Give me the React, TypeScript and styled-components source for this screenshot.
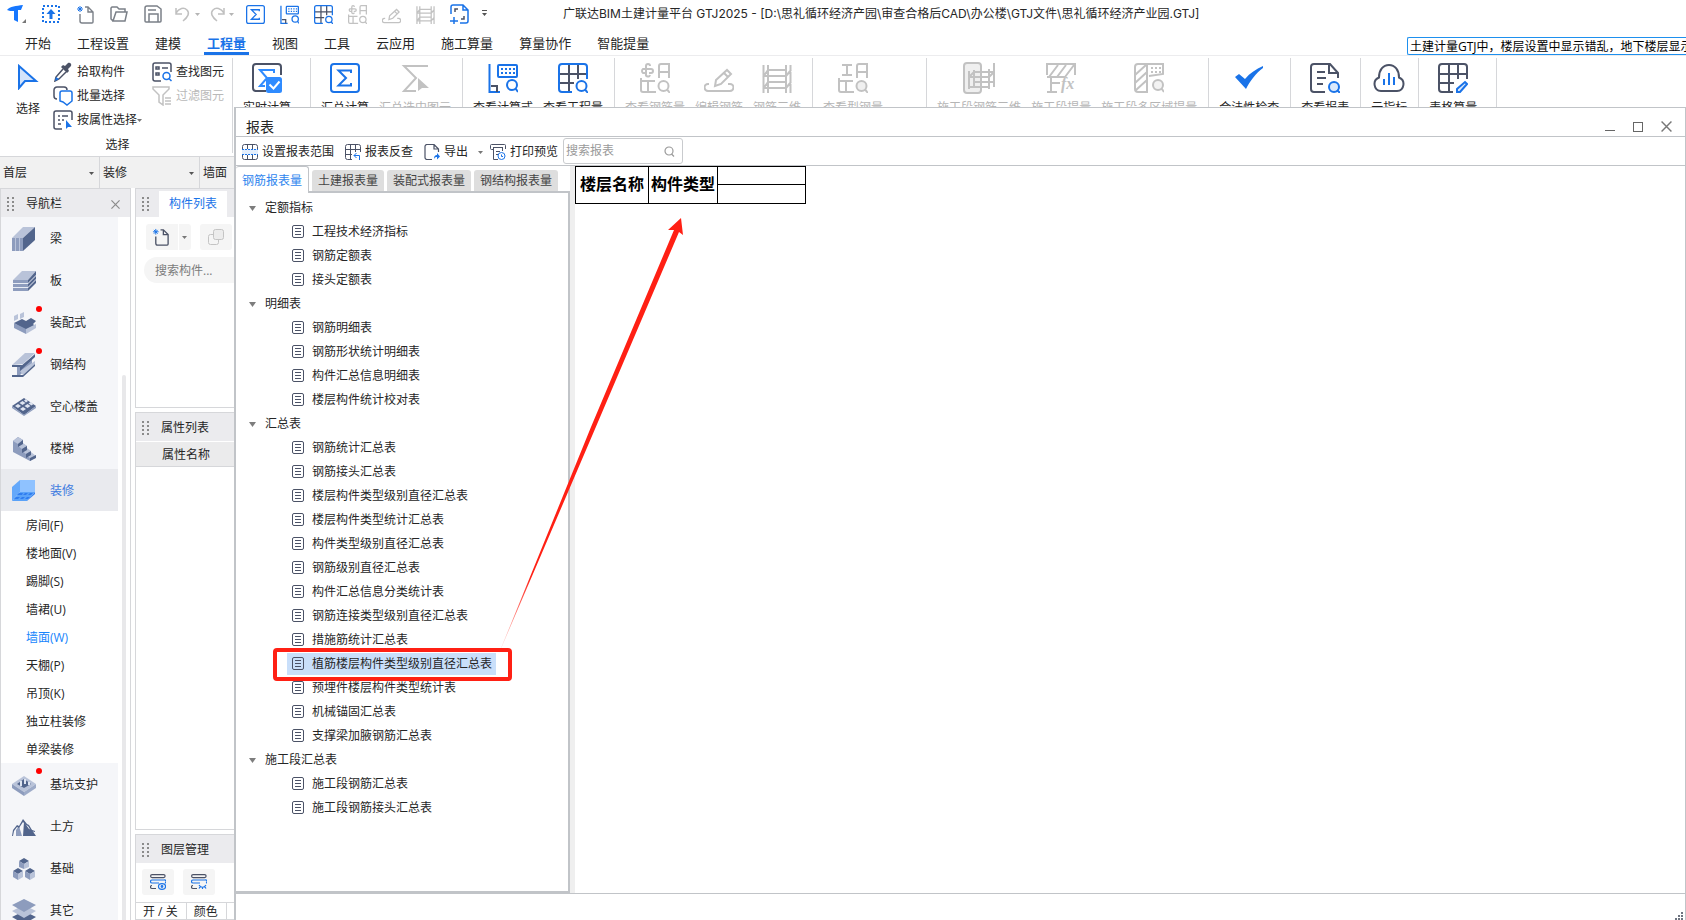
import React from "react";
import styled, { createGlobalStyle } from "styled-components";

const BLUE = "#1a73e8";
const DARK = "#4b5266";
const GRAY = "#c2c2c2";
const LINE = "#d6d7da";
const FRAME = "#c1c4c8";

const GlobalStyle = createGlobalStyle`
  * { box-sizing: border-box; }
  html, body { margin: 0; padding: 0; background: #fff; }
  body, button, input, select, table {
    font-family: "Open Sans", "Noto Sans CJK SC", sans-serif;
    font-size: 12px;
    line-height: 16px;
    color: #262626;
  }
  button { border: 0; padding: 0; background: none; white-space: nowrap; }
  ul { list-style: none; margin: 0; padding: 0; }
  svg { display: block; flex: none; }
  h2 { margin: 0; font-size: 12px; font-weight: 400; }
`;

/* ---------- icons ---------- */

type IconProps = { size?: number };

const Line = ({
  size = 30,
  box = 30,
  stroke = BLUE,
  w = 2,
  children,
}: {
  size?: number;
  box?: number;
  stroke?: string;
  w?: number;
  children: React.ReactNode;
}) => (
  <svg width={size} height={size} viewBox={`0 0 ${box} ${box}`} fill="none" stroke={stroke} strokeWidth={w} aria-hidden="true">
    {children}
  </svg>
);

const Sigma = ({ size }: IconProps) => (
  <Line size={size}>
    <rect x="1" y="1" width="28" height="28" rx="3" />
    <path d="M21 10V7.500H8.500L16 15l-7.500 7.500H21V20" />
  </Line>
);
const SigmaCheck = () => (
  <Line>
    <path d="M14 28H4a3 3 0 0 1-3-3V4a3 3 0 0 1 3-3h22a3 3 0 0 1 3 3v8" stroke={DARK} />
    <path d="M22 10V7H8l7 8-7 8h5" stroke="#2f8bff" />
    <rect x="14" y="14" width="16" height="16" rx="2.500" fill="#2f8bff" stroke="none" />
    <path d="M17.500 21.500l4 4 6-7" stroke="#fff" />
  </Line>
);
const SigmaPick = () => (
  <Line stroke={GRAY}>
    <path d="M28 3H4l12 12L4 28h12" />
    <path d="M18 15v13l4-3 7 0z" fill={GRAY} stroke="none" />
  </Line>
);
const Formula = ({ size }: IconProps) => (
  <Line size={size}>
    <path d="M1.500 1v28H12" />
    <path d="M3 23h6v6" stroke={DARK} />
    <rect x="10" y="2" width="19" height="12" rx="1" />
    <path d="M13 6h14M13 10h14" strokeDasharray="2 2" />
    <circle cx="24" cy="22" r="5" />
    <path d="M27.500 25.500L30 29" />
  </Line>
);
const GridSearch = ({ size }: IconProps) => (
  <Line size={size}>
    <path d="M11 1v28M20 1v15M1 11h28M1 20h15" stroke={DARK} />
    <path d="M14 29H4a3 3 0 0 1-3-3V4a3 3 0 0 1 3-3h22a3 3 0 0 1 3 3v12" />
    <circle cx="23.500" cy="23" r="5" />
    <path d="M27 26.500L30 30" />
  </Line>
);
const RebarQty = ({ size }: IconProps) => (
  <Line size={size} stroke={GRAY}>
    <path d="M6 10H3a2.500 2.500 0 0 1 0-4h8a2 2 0 0 1 0 4H9M6 13V3a2 2 0 0 1 4 0M6 11a2 2 0 0 0 4 1" />
    <path d="M19 15V3a2 2 0 0 1 2-2h8v14M19 9h10M1 15v12a2 2 0 0 0 2 2h13M1 18h14M8 18v11" />
    <circle cx="23.500" cy="23" r="5" />
    <path d="M27 26.500L30 30" />
  </Line>
);
const RebarEdit = ({ size }: IconProps) => (
  <Line size={size} stroke={GRAY}>
    <path d="M5 21H4a3.500 3.500 0 0 0 0 7h22a3.500 3.500 0 0 0 0-7h-2" />
    <path d="M11 23l1-6L23 7l4 4-10 10zM20 10l4 4" />
  </Line>
);
const Rebar3d = ({ size }: IconProps) => (
  <Line size={size} stroke={GRAY}>
    <path d="M1.500 2v28M6 2v28M24 2v28M28.500 2v28M6 7h18M2 13h22M6 19h18M2 25h22M1 14l5-7M24 13l5-6M1 26l5-7M24 25l5-6" />
  </Line>
);
const SteelQty = () => (
  <Line stroke={GRAY}>
    <path d="M4 2h10M4 12h10M9 1v12" />
    <path d="M19 15V3a2 2 0 0 1 2-2h8v14M19 9h10M1 15v12a2 2 0 0 0 2 2h13M1 18h14M8 18v11" />
    <circle cx="23.500" cy="23" r="5" fill="#f0f0f0" />
    <path d="M27 26.500L30 30" />
  </Line>
);
const StageRebar = () => (
  <svg width="34" height="32" viewBox="0 0 34 32" fill="none" stroke={GRAY} strokeWidth="2" aria-hidden="true">
    <rect x="2" y="1" width="17" height="30" rx="3" fill="#efefef" />
    <path d="M7 9v18M12 8v18M27 7v20M32 1v24M12 10h20M7 15h20M12 20h20M7 25h20M7 15l5-5M27 15l5-5" />
  </svg>
);
const StageQty = () => (
  <Line stroke={GRAY}>
    <path d="M1 12V1h28v11M1 14h18M3 14L12 2M11 14L20 2M19 14L28 2M5 15v14M1 29h10M5 20h9" />
    <text x="15" y="26" fontFamily="Liberation Serif, serif" fontStyle="italic" fontWeight="700" fontSize="16" fill={GRAY} stroke="none">
      fx
    </text>
  </Line>
);
const StageZone = () => (
  <Line stroke={GRAY}>
    <path d="M13 1H4a3 3 0 0 0-3 3v22a3 3 0 0 0 3 3h9zM1 12L12 2M1 20l12-11M2 27l11-10M13 1h16v10l-14 2" />
    <path d="M17 5h10M17 9h10" strokeDasharray="2 2" />
    <circle cx="24" cy="22" r="5" fill="#f3f3f3" />
    <path d="M27.500 25.500L30 29" />
  </Line>
);
const BigCheck = () => (
  <svg width="30" height="30" viewBox="0 0 30 30" aria-hidden="true">
    <path d="M1 14l4-3 6 5C16 10 22 6 29 3v2C22 10 16 18 12 26z" fill={BLUE} />
  </svg>
);
const ReportIcon = () => (
  <Line stroke={DARK}>
    <path d="M15 29H4a3 3 0 0 1-3-3V4a3 3 0 0 1 3-3h16l8 9v5M19 2v8h9M7 9h8M7 15h9M7 21h6" />
    <circle cx="24" cy="24" r="5" stroke={BLUE} fill="#dceafc" />
    <path d="M27 27l3 3" stroke={BLUE} />
  </Line>
);
const CloudIcon = () => (
  <Line size={32} box={32} stroke={DARK}>
    <path d="M8 29a7 7 0 0 1-2-13.500C6 8 10 3 16 3s10 5 10 12.500A7 7 0 0 1 24 29z" />
    <path d="M11 23v-6M16 23V11M21 23v-8" stroke={BLUE} />
  </Line>
);
const TableEdit = () => (
  <Line stroke={DARK}>
    <path d="M15 29H4a3 3 0 0 1-3-3V4a3 3 0 0 1 3-3h22a3 3 0 0 1 3 3v12M11 1v28M20 1v15M1 11h28M1 20h15" />
    <path d="M19 29v-3l8-7 2 2-7 8z" stroke={BLUE} fill="#dceafc" />
  </Line>
);

const Logo = () => (
  <svg width="20" height="19" viewBox="0 0 20 19" aria-hidden="true">
    <path d="M0 5C3 1 9 1 16 0l-2 5-3 0v12l-4-2V6C4 6 2 6 0 5z" fill="#1677ff" />
    <path d="M19 14v4h-4z" fill="#777" />
  </svg>
);
const UploadBox = () => (
  <Line size={18} box={18}>
    <rect x="1" y="1" width="16" height="16" strokeDasharray="2 2" />
    <path d="M9 14V6" strokeWidth="3" />
    <path d="M4.500 9L9 4l4.500 5z" fill={BLUE} stroke="none" />
  </Line>
);
const NewDoc = ({ size = 19, tone = DARK }: { size?: number; tone?: string }) => (
  <Line size={size} box={19} stroke={tone} w={1.4}>
    <path d="M4 9v7a2 2 0 0 0 2 2h10a1 1 0 0 0 1-1V7l-5-5H9M12 2v5h5" />
    <path d="M4 1v6M1 4h6M2 2l4 4M6 2L2 6" stroke={BLUE} strokeWidth="1" />
  </Line>
);
const OpenDoc = () => (
  <Line size={18} box={18} stroke="#7b8088" w={1.5}>
    <path d="M3 16L1 14V3l1-1h5l2 2h6v3M3 16L6 7h11l-2 9z" />
  </Line>
);
const SaveDoc = () => (
  <Line size={18} box={18} stroke="#7b8088" w={1.5}>
    <path d="M1 3a2 2 0 0 1 2-2h10l4 3v12a1 1 0 0 1-1 1H2a1 1 0 0 1-1-1zM5 17V9h9v8M4 5h8" />
  </Line>
);
const Turn = ({ redo }: { redo?: boolean }) => (
  <svg width="18" height="18" viewBox="0 0 18 18" fill="none" stroke="#c0c0c0" strokeWidth="1.500" aria-hidden="true">
    <path
      transform={redo ? "matrix(-1 0 0 1 18 0)" : undefined}
      d="M2 3v6h6M2 8c3-5 8-6 11-3s1 7-4 11"
    />
  </svg>
);
const AddFrame = () => (
  <Line size={20} box={20} w={1.5}>
    <path d="M2 10V3a2 2 0 0 1 2-2h10l5 5v11a2 2 0 0 1-2 2h-6M14 1v5h5" />
    <path d="M5 13v7M1 17h8" />
    <path d="M6 8V5h3M15 12v3h-3" stroke={DARK} />
  </Line>
);
const Caret = ({ color = "#777" }: { color?: string }) => (
  <svg width="5" height="3" viewBox="0 0 5 3" aria-hidden="true">
    <path d="M0 0h5L2.500 3z" fill={color} />
  </svg>
);

const ArrowCursor = () => (
  <Line size={26} box={26}>
    <path d="M4 2v22l6-7h11z" fill="#d3e4fb" />
  </Line>
);
const Dropper = () => (
  <svg width="20" height="20" viewBox="0 0 20 20" aria-hidden="true">
    <path d="M10 7l-7 8-1 4 4-2 7-7" fill="none" stroke={DARK} strokeWidth="1.500" />
    <path d="M3 15l-1 4 4-2" fill={BLUE} />
    <path d="M8 5l2-2 2 1 3-3c2-1 4 1 3 3l-3 3 1 2-2 2z" fill={DARK} />
  </svg>
);
const BatchSelect = () => (
  <Line size={20} box={20} stroke={DARK} w={1.5}>
    <path d="M4 13a3 3 0 0 1-3-3V4a3 3 0 0 1 3-3h7a3 3 0 0 1 3 3" />
    <path d="M9 5h8a2 2 0 0 1 2 2v8l-5 4-4-3-3-1V7a2 2 0 0 1 2-2z" fill="#fff" stroke={BLUE} />
  </Line>
);
const PropSelect = () => (
  <Line size={20} box={20} stroke={DARK} w={1.5}>
    <path d="M9 19H3a2 2 0 0 1-2-2V3a2 2 0 0 1 2-2h14a2 2 0 0 1 2 2v7M5 6h2M9 6h6M5 10h2M9 10h2M5 14h3" />
    <path d="M13 10v9l2-2h4z" fill={BLUE} stroke="none" />
  </Line>
);
const FindElement = () => (
  <Line size={20} box={20} stroke={DARK} w={1.5}>
    <path d="M9 19H3a2 2 0 0 1-2-2V3a2 2 0 0 1 2-2h14a2 2 0 0 1 2 2v7M4 5h3v2H4zM10 6h6M4 11h3v2H4z" />
    <circle cx="14.500" cy="14" r="3.500" stroke={BLUE} />
    <path d="M17 16.500l2.500 2.500" stroke={BLUE} />
  </Line>
);
const FilterIcon = () => (
  <Line size={20} box={20} stroke={GRAY} w={1.5}>
    <path d="M1 1h16v2l-6 6v10l-4-3V9L1 3zM13 12h6M13 15h6M13 18h6" />
  </Line>
);

const RangeIcon = () => (
  <Line size={16} box={16} stroke={DARK} w={1}>
    <path d="M0 5h16v6H0z" fill="#e3eefc" stroke="none" />
    <path d="M.500 5V2.500a2 2 0 0 1 2-2h11a2 2 0 0 1 2 2V5M.500 11v2.500a2 2 0 0 0 2 2h11a2 2 0 0 0 2-2V11M5.500 0v5M10.500 0v5M5.500 11v5M10.500 11v5" />
    <path d="M0 5.500h16M0 10.500h16" stroke={BLUE} strokeDasharray="2 1" />
  </Line>
);
const BackCheck = () => (
  <Line size={16} box={16} stroke={DARK} w={1}>
    <path d="M7 15.500H2.500a2 2 0 0 1-2-2v-11a2 2 0 0 1 2-2h11a2 2 0 0 1 2 2V8M5.500 0v16M10.500 0v8M0 5.500h16M0 10.500h7" />
    <path d="M14.500 16v-4.500H9M11.500 9L9 11.500l2.500 2.500" stroke={BLUE} />
  </Line>
);
const ExportIcon = () => (
  <Line size={16} box={16} stroke={DARK} w={1.2}>
    <path d="M8 15.500H3a2 2 0 0 1-2-2v-11a2 2 0 0 1 2-2h7L14.500 5v3M10 1v4h4" />
    <path d="M10 15c0-3 1-4 3-4V9l3 3.500-3 3V13c-1 0-2 0-3 2z" fill={BLUE} stroke="none" />
  </Line>
);
const PrintIcon = () => (
  <Line size={16} box={16} stroke={DARK} w={1}>
    <path d="M3 5.500H1.500a1 1 0 0 1-1-1V1.500a1 1 0 0 1 1-1h13a1 1 0 0 1 1 1V5M3 3.500h10M3.500 4v11.500H8M12.500 4v3M6 7.500h4M6 10.500h2" />
    <circle cx="11.500" cy="12" r="3.500" stroke={BLUE} />
    <path d="M11.500 10.500V12.500h1.500" stroke={BLUE} />
  </Line>
);
const SearchIcon = () => (
  <Line size={11} box={11} stroke="#9a9a9a" w={1.2}>
    <circle cx="5" cy="5" r="4" />
    <path d="M7.500 8l2.500 2.500" />
  </Line>
);
const LeafIcon = () => (
  <svg width="12" height="14" viewBox="0 0 12 14" fill="none" stroke={DARK} aria-hidden="true">
    <rect x=".500" y=".500" width="11" height="12" rx="1.500" />
    <path d="M3 3.500h6M3 6.500h6M3 9.500h6" />
  </svg>
);
const TreeCaret = () => (
  <svg width="7" height="5" viewBox="0 0 7 5" aria-hidden="true">
    <path d="M0 0h7L3.500 5z" fill="#7d7d7d" />
  </svg>
);
const Cross = ({ size = 9, color = "#8a8a8a" }: { size?: number; color?: string }) => (
  <Line size={size} box={10} stroke={color} w={1.3}>
    <path d="M.500.500l9 9M9.500.500l-9 9" />
  </Line>
);
const CopyIcon = () => (
  <Line size={16} box={16} stroke="#c4c4c4" w={1}>
    <rect x=".500" y="5.500" width="10" height="10" rx="2" />
    <rect x="5.500" y=".500" width="10" height="10" rx="2" fill="#ececec" />
  </Line>
);
const LayerIcon = ({ closed }: { closed?: boolean }) => (
  <Line size={16} box={16} stroke={DARK} w={1.2}>
    <rect x=".600" y=".600" width="14.500" height="3" rx="1.500" />
    <path d="M2 6h12a1.500 1.500 0 0 1 1 3M2 6a1.500 1.500 0 0 0 0 3h7" stroke={BLUE} />
    <path d="M2 11.500a1.500 1.500 0 0 0 0 3h4" />
    {closed ? (
      <path d="M8 11c2 3 5 3 7 0M9 13l-1 1.500M11.500 13.500V15M14 13l1 1.500" stroke={BLUE} />
    ) : (
      <>
        <ellipse cx="12" cy="12.500" rx="3.500" ry="2.800" stroke={BLUE} />
        <circle cx="12" cy="12.500" r=".800" stroke={BLUE} />
      </>
    )}
  </Line>
);

const A = "#b9c3d9";
const B = "#8d9cbd";
const C = "#52658c";
type Shape = [string, string];
const NAV_SHAPES: Record<string, Shape[]> = {
  beam: [
    ["M0 11L11 0h12L11 11z", A],
    ["M11 11L23 0v13L11 24z", C],
    ["M0 11h11v13H0z", B],
    ["M3 11h1v13H3zM7 11h1v13H7z", A],
  ],
  slab: [
    ["M1 11L10 2h14l-8 9z", A],
    ["M1 11h15v11H1z", B],
    ["M16 11l8-9v12l-8 8z", C],
    ["M1 14h15l8-8v1l-8 8H1zM1 18h15l8-8v1l-8 8H1z", "#e9edf5"],
  ],
  prefab: [
    ["M2 5l4-2v5L2 10zM8 3l4-2v5L8 8z", A],
    ["M2 12l8-4 4 2 5-3 5 3-3 3 2 2-9 5z", C],
    ["M2 12l12 6v5L2 17z", B],
    ["M14 18l10-5v4l-10 6z", A],
  ],
  steel: [
    ["M0 12L13 0h10L11 11z", A],
    ["M0 12h11v2H0zM0 22h11v2H0z", C],
    ["M5 14h3l12-9v6L8 22H5z", B],
    ["M8 18L23 8v3L11 22z", A],
    ["M8 14L23 1v3L8 18zM11 22l12-11v2L11 24z", C],
  ],
  hollow: [
    ["M0 11L12 3l12 8-12 9z", C],
    [
      "M3 11l3-2 3 2-3 2zM7.500 8l3-2 3 2-3 2zM12 5.500L14 4l2 2-2 1.500zM8 14l3-2 3 2-3 2zM12.500 11l3-2 3 2-3 2zM16.500 8.500l2-1.500 3 2-2 1.500z",
      "#dfe5f1",
    ],
    ["M0 11l12 9 12-9v2l-12 8L0 13z", B],
  ],
  stair: [
    ["M1 4l5-4 5 3v4l4 2v4l4 2v3l5 2-6 4L1 15z", B],
    ["M1 4l5-4 5 3-5 4zM6 9l5-3 4 3-5 3zM10 14l5-3 4 3-5 3zM14 18l5-3 5 4-5 3z", A],
    ["M6 7l5-4v4l-5 3zM10 12l5-3v4l-5 3zM14 17l5-3v4l-5 3zM18 21l6-3v3l-6 3z", C],
  ],
  finish: [
    ["M0 8l8-7v12l-8 9z", "#64a8fa"],
    ["M8 1h15v12H8z", "#8fc2ff"],
    ["M0 22l8-9h15l-8 9z", "#5aa2f8"],
    ["M15 22l8-9v2l-8 7zM7 14h4l-1 2H5zM13 14h3l-2 2h-3zM18 14h3l-2 2h-3zM4 18h4l-2 2H2zM10 18h3l-2 2H8zM15 18h3l-2 2h-3z", "#2f7df0"],
  ],
  pit: [
    ["M0 11l12-8 12 8-12 8z", A],
    ["M5 11l7-5 7 5-7 4z", C],
    ["M8 8h2v5H8zM12 6h2v5h-2zM16 9h2v3h-2z", "#dfe5f1"],
    ["M0 11l12 8v4L0 15z", B],
    ["M12 19l12-8v4l-12 8z", "#9dabc8"],
  ],
  earth: [
    ["M4 21V15l3-4 3 10z", B],
    ["M11 21l1-14 5 7 3 1 4 6z", C],
    ["M0 21l1-6 4-5 2 1 4-7 4 5 2 1 3 5 3 1v1l-4-1-3-5-2-1-3-3-4 6-2-1-3 4-1 5z", C],
  ],
  base: [
    ["M7 4l5-3 5 3-5 3zM1 14l5-3 5 3-5 3zM13 14l5-3 5 3-5 3z", C],
    ["M7 4l5 3v5l-5-2zM1 14l5 3v6l-5-3zM13 14l5 3v6l-5-3z", B],
    ["M17 4l-5 3v5l5-2zM11 14l-5 3v6l5-3zM23 14l-5 3v6l5-3z", A],
  ],
  other: [
    ["M0 18l12-6 12 6-12 7z", C],
    ["M0 12l12-6 12 6-12 7z", A],
    ["M0 6l12-6 12 6-12 7z", B],
  ],
};
const NavIcon = ({ name }: { name: string }) => (
  <svg width="24" height="24" viewBox="0 0 24 24" aria-hidden="true">
    {NAV_SHAPES[name].map(([d, fill], i) => (
      <path key={i} d={d} fill={fill} />
    ))}
  </svg>
);
const Grip = () => (
  <svg width="7" height="14" viewBox="0 0 7 14" fill="#8b8b8b" aria-hidden="true">
    {[0, 4, 8, 12].map((y) => (
      <path key={y} d={`M0 ${y}h2v2H0zM5 ${y}h2v2H5z`} />
    ))}
  </svg>
);

/* ---------- application frame ---------- */

const Shell = styled.div`
  position: relative;
  display: flex;
  flex-direction: column;
  height: 100vh;
  overflow: hidden;
  background: #fff;
`;
const TitleBar = styled.header`
  display: flex;
  align-items: center;
  height: 28px;
`;
const QuickButton = styled.button`
  display: flex;
  align-items: center;
  justify-content: center;
  gap: 3px;
  width: 34px;
  height: 26px;
`;
const WindowTitle = styled.span`
  margin-left: 71px;
  white-space: nowrap;
  font-family: Inter, "Noto Sans CJK SC", sans-serif;
`;
const TabBar = styled.nav`
  display: flex;
  align-items: stretch;
  height: 28px;
  padding-left: 12px;
  border-bottom: 1px solid #ececee;
`;
const MenuTab = styled.button<{ $active?: boolean }>`
  margin: 0 10px;
  padding: 7px 3px 1px;
  font-size: 13px;
  border-bottom: 3px solid ${(p) => (p.$active ? BLUE : "transparent")};
  color: ${(p) => (p.$active ? BLUE : "#262626")};
  font-weight: ${(p) => (p.$active ? 700 : 400)};
`;
const Notice = styled.div`
  flex: 0 0 279px;
  align-self: flex-end;
  margin-left: auto;
  height: 18px;
  padding-left: 2px;
  line-height: 18px;
  overflow: hidden;
  white-space: nowrap;
  border: 1px solid #1e90ee;
  border-right: 0;
  border-radius: 2px 0 0 2px;
  color: #000;
`;
const Ribbon = styled.section`
  display: flex;
  height: 100px;
  padding-top: 2px;
`;
const SelectGroup = styled.div`
  display: grid;
  grid-template-columns: 50px 99px auto;
  grid-template-rows: 77px 17px;
  width: 233px;
  height: 95px;
  padding-left: 3px;
  border-right: 1px solid ${LINE};
`;
const SelectButton = styled.button`
  display: flex;
  flex-direction: column;
  align-items: center;
  gap: 11px;
  padding-top: 6px;
`;
const ToolColumn = styled.div`
  display: flex;
  flex-direction: column;
  padding-top: 2px;
`;
const SmallTool = styled.button`
  display: flex;
  align-items: center;
  gap: 4px;
  height: 24px;
  flex: none;
  &:disabled { color: #b9b9b9; }
  span { display: flex; align-items: center; }
`;
const GroupLabel = styled.div`
  grid-column: 1 / -1;
  text-align: center;
  padding-top: 2px;
`;
const RibbonGroup = styled.div<{ $min?: number }>`
  display: flex;
  gap: 10px;
  height: 95px;
  min-width: ${(p) => p.$min ?? 0}px;
  padding: 4px 11px 0 10px;
  border-right: 1px solid ${LINE};
`;
const BigTool = styled.button`
  display: flex;
  flex-direction: column;
  align-items: center;
  gap: 6px;
  &:disabled { color: #b5b5b5; }
`;
const BigIcon = styled.span`
  display: flex;
  align-items: center;
  height: 32px;
`;

const FloorBar = styled.div`
  display: flex;
  height: 32px;
  width: 300px;
  flex: none;
  background: #f1f1f1;
  border-top: 1px solid ${LINE};
`;
const Picker = styled.label`
  position: relative;
  width: 100px;
  border-right: 1px solid ${LINE};
  select {
    width: 100%;
    height: 31px;
    padding: 0 3px;
    border: 0;
    appearance: none;
    background: transparent;
  }
  svg { position: absolute; right: 5px; top: 15px; }
`;

const Workspace = styled.main`
  display: flex;
  gap: 4px;
  flex: 1;
  min-height: 0;
`;
const NavPanel = styled.aside`
  display: flex;
  flex-direction: column;
  width: 131px;
  border: 1px solid ${LINE};
  border-bottom: 0;
  overflow: hidden;
`;
const PanelHeader = styled.div`
  display: flex;
  align-items: center;
  flex: none;
  height: 28px;
  padding: 2px 10px 0 6px;
  background: #ebebee;
  h2 { margin-left: 12px; flex: 1; }
`;
const NavBody = styled.div`
  display: flex;
  flex: 1;
  min-height: 0;
`;
const NavList = styled.ul`
  width: 117px;
  overflow: hidden;
`;
const NavItem = styled.button<{ $active?: boolean }>`
  position: relative;
  display: flex;
  align-items: center;
  gap: 14px;
  width: 100%;
  height: 42px;
  padding: 2px 0 0 11px;
  background: ${(p) => (p.$active ? "#e9eaee" : "#f5f6f9")};
  color: ${(p) => (p.$active ? "#3d7be0" : "#262626")};
`;
const Dot = styled.i`
  position: absolute;
  left: 35px;
  top: 5px;
  width: 6px;
  height: 6px;
  border-radius: 50%;
  background: #ff0000;
`;
const SubItem = styled.button<{ $active?: boolean }>`
  display: block;
  width: 100%;
  height: 28px;
  padding: 2px 0 0 25px;
  text-align: left;
  color: ${(p) => (p.$active ? "#1684fc" : "#262626")};
`;
const ScrollThumb = styled.div`
  width: 4px;
  margin: 158px 0 0 4px;
  border-radius: 2px 2px 0 0;
  background: #e8e8ea;
`;

const DockColumn = styled.div`
  display: flex;
  flex-direction: column;
  gap: 4px;
  width: 165px;
`;
const Dock = styled.section<{ $height?: number }>`
  flex: ${(p) => (p.$height ? `0 0 ${p.$height}px` : "1 1 0")};
  border: 1px solid ${LINE};
  overflow: hidden;
`;
const DockTab = styled.button`
  height: 26px;
  margin-left: 10px;
  padding: 0 10px;
  background: #fff;
  color: ${BLUE};
`;
const DockTools = styled.div<{ $tight?: boolean }>`
  display: flex;
  gap: 9px;
  padding: ${(p) => (p.$tight ? "6px 6px 7px" : "7px 10px")};
`;
const DockButton = styled.button<{ $split?: boolean }>`
  display: flex;
  align-items: center;
  justify-content: ${(p) => (p.$split ? "space-between" : "center")};
  width: ${(p) => (p.$split ? 45 : 32)}px;
  height: 26px;
  padding: ${(p) => (p.$split ? "0 4px 0 6px" : "0")};
  border-radius: 3px;
  background: ${(p) => (p.$split ? "linear-gradient(90deg, #f5f5f5 32px, #fff 32px 33px, #f5f5f5 33px)" : "#f5f5f5")};
`;
const DockSearch = styled.input`
  display: block;
  width: 140px;
  height: 26px;
  margin-left: 8px;
  padding: 0 11px;
  border: 0;
  border-radius: 13px;
  background: #f5f5f5;
  &::placeholder { color: #7c7c7c; opacity: 1; }
`;
const FieldHead = styled.div`
  height: 26px;
  padding: 5px 0 0 26px;
  background: #ebebec;
  border-top: 1px solid #fff;
  border-bottom: 1px solid ${LINE};
`;
const LayerTable = styled.table`
  border-collapse: separate;
  border-spacing: 0;
  width: 100%;
  th {
    padding: 1px 8px 0 7px;
    font-weight: 400;
    text-align: left;
    white-space: nowrap;
    border: solid ${LINE};
    border-width: 1px 1px 0 0;
  }
  th:last-child { width: 100%; }
`;

/* ---------- report window ---------- */

const Dialog = styled.section`
  position: absolute;
  left: 234px;
  right: 0;
  top: 107px;
  bottom: 0;
  display: flex;
  flex-direction: column;
  background: #fff;
  border: solid ${FRAME};
  border-width: 1px 1px 0 2px;
`;
const DialogTitle = styled.div`
  display: flex;
  align-items: center;
  flex: none;
  height: 29px;
  padding: 9px 13px 0 10px;
  border-bottom: 1px solid ${FRAME};
  h2 { flex: 1; font-size: 14px; }
`;
const WindowButtons = styled.div`
  display: flex;
  gap: 16px;
  button {
    display: flex;
    align-items: center;
    justify-content: center;
    width: 12px;
    height: 12px;
  }
`;
const DialogTools = styled.div`
  display: flex;
  align-items: center;
  flex: none;
  height: 29px;
  padding-left: 6px;
  border-bottom: 1px solid ${FRAME};
`;
const DialogTool = styled.button<{ $gap?: number }>`
  display: flex;
  align-items: center;
  gap: 4px;
  padding-top: 2px;
  margin-right: ${(p) => p.$gap ?? 11}px;
  & > svg + span + svg { margin-left: 6px; }
`;
const SearchBox = styled.label`
  display: flex;
  align-items: center;
  width: 120px;
  height: 26px;
  padding: 0 7px 0 2px;
  border: 1px solid #c9cbce;
  border-radius: 3px;
  input {
    flex: 1;
    min-width: 0;
    padding: 0;
    border: 0;
    outline: 0;
    background: none;
  }
  input::placeholder { color: #9a9a9a; opacity: 1; }
`;
const DialogBody = styled.div`
  display: flex;
  flex: 1;
  min-height: 0;
`;
const TreeSide = styled.div`
  display: flex;
  flex-direction: column;
  width: 334px;
`;
const ReportTabs = styled.div`
  display: flex;
  align-items: flex-end;
  gap: 3px;
  height: 25px;
`;
const ReportTab = styled.button<{ $active?: boolean }>`
  position: relative;
  height: ${(p) => (p.$active ? 27 : 21)}px;
  margin-bottom: ${(p) => (p.$active ? -2 : 0)}px;
  padding: 1px 6px 0;
  border-radius: 3px 3px 0 0;
  border: solid ${FRAME};
  border-width: ${(p) => (p.$active ? "1px 1px 0 0" : "0")};
  background: ${(p) => (p.$active ? "#fff" : "#dedede")};
  color: ${(p) => (p.$active ? "#2f86ee" : "#444")};
`;
const TreePanel = styled.div`
  flex: 1;
  padding-top: 3px;
  border: solid ${FRAME};
  border-width: 2px 2px 2px 0;
`;
const GroupRow = styled.button`
  display: flex;
  align-items: center;
  gap: 9px;
  height: 24px;
  padding-left: 13px;
`;
const LeafRow = styled.li`
  display: flex;
  align-items: center;
  height: 24px;
  padding-left: 51px;
`;
const LeafButton = styled.button<{ $selected?: boolean }>`
  position: relative;
  display: flex;
  align-items: center;
  gap: 8px;
  height: 22px;
  padding: 0 4px 0 5px;
  background: ${(p) => (p.$selected ? "#c9dffa" : "transparent")};
`;
const Callout = styled.span`
  position: absolute;
  z-index: 1;
  inset: -5px -16px -6px -14px;
  border: 4px solid #ff2014;
  border-radius: 4px;
`;
const Splitter = styled.div`
  width: 5px;
  background: #efefef;
`;
const ReportArea = styled.div`
  flex: 1;
  overflow: hidden;
`;
const ReportTable = styled.table`
  border-collapse: collapse;
  table-layout: fixed;
  width: 230px;
  color: #000;
  th {
    padding: 0 0 3px;
    border: 1px solid #000;
    font-size: 16px;
    font-weight: 700;
    white-space: nowrap;
  }
  tr { height: 18px; }
  tr + tr { height: 19px; }
  th:empty { padding: 0; }
`;
const StatusBar = styled.footer`
  display: flex;
  justify-content: flex-end;
  align-items: flex-end;
  height: 27px;
  padding-right: 2px;
  border-top: 1px solid ${FRAME};
`;
const Pointer = styled.svg`
  position: absolute;
  left: 256px;
  top: 108px;
  pointer-events: none;
`;

/* ---------- data ---------- */

const QUICK: [string, React.ReactNode][] = [
  ["菜单", <Logo />],
  ["上传", <UploadBox />],
  ["新建", <NewDoc tone="#7b8088" />],
  ["打开", <OpenDoc />],
  ["保存", <SaveDoc />],
  ["撤销", <><Turn /><Caret color="#b5b5b5" /></>],
  ["恢复", <><Turn redo /><Caret color="#b5b5b5" /></>],
  ["汇总计算", <Sigma size={19} />],
  ["查看计算式", <Formula size={19} />],
  ["查看工程量", <GridSearch size={19} />],
  ["查看钢筋量", <RebarQty size={19} />],
  ["编辑钢筋", <RebarEdit size={19} />],
  ["钢筋三维", <Rebar3d size={19} />],
  ["添加", <AddFrame />],
];

const MENU = ["开始", "工程设置", "建模", "工程量", "视图", "工具", "云应用", "施工算量", "算量协作", "智能提量"];

type Tool = { label: string; icon: React.ReactNode; off?: boolean };
const GROUPS: { min?: number; tools: Tool[] }[] = [
  { min: 78, tools: [{ label: "实时计算", icon: <SigmaCheck /> }] },
  {
    tools: [
      { label: "汇总计算", icon: <Sigma /> },
      { label: "汇总选中图元", icon: <SigmaPick />, off: true },
    ],
  },
  {
    tools: [
      { label: "查看计算式", icon: <Formula /> },
      { label: "查看工程量", icon: <GridSearch /> },
    ],
  },
  {
    tools: [
      { label: "查看钢筋量", icon: <RebarQty />, off: true },
      { label: "编辑钢筋", icon: <RebarEdit />, off: true },
      { label: "钢筋三维", icon: <Rebar3d />, off: true },
    ],
  },
  { min: 114, tools: [{ label: "查看型钢量", icon: <SteelQty />, off: true }] },
  {
    tools: [
      { label: "施工段钢筋三维", icon: <StageRebar />, off: true },
      { label: "施工段提量", icon: <StageQty />, off: true },
      { label: "施工段多区域提量", icon: <StageZone />, off: true },
    ],
  },
  { tools: [{ label: "合法性检查", icon: <BigCheck /> }] },
  { tools: [{ label: "查看报表", icon: <ReportIcon /> }] },
  { tools: [{ label: "云指标", icon: <CloudIcon /> }] },
  { min: 78, tools: [{ label: "表格算量", icon: <TableEdit /> }] },
];

const NAV: { label: string; icon: string; dot?: boolean; children?: string[] }[] = [
  { label: "梁", icon: "beam" },
  { label: "板", icon: "slab" },
  { label: "装配式", icon: "prefab", dot: true },
  { label: "钢结构", icon: "steel", dot: true },
  { label: "空心楼盖", icon: "hollow" },
  { label: "楼梯", icon: "stair" },
  {
    label: "装修",
    icon: "finish",
    children: ["房间(F)", "楼地面(V)", "踢脚(S)", "墙裙(U)", "墙面(W)", "天棚(P)", "吊顶(K)", "独立柱装修", "单梁装修"],
  },
  { label: "基坑支护", icon: "pit", dot: true },
  { label: "土方", icon: "earth" },
  { label: "基础", icon: "base" },
  { label: "其它", icon: "other" },
];

const TREE: { label: string; leaves: string[] }[] = [
  { label: "定额指标", leaves: ["工程技术经济指标", "钢筋定额表", "接头定额表"] },
  { label: "明细表", leaves: ["钢筋明细表", "钢筋形状统计明细表", "构件汇总信息明细表", "楼层构件统计校对表"] },
  {
    label: "汇总表",
    leaves: [
      "钢筋统计汇总表",
      "钢筋接头汇总表",
      "楼层构件类型级别直径汇总表",
      "楼层构件类型统计汇总表",
      "构件类型级别直径汇总表",
      "钢筋级别直径汇总表",
      "构件汇总信息分类统计表",
      "钢筋连接类型级别直径汇总表",
      "措施筋统计汇总表",
      "植筋楼层构件类型级别直径汇总表",
      "预埋件楼层构件类型统计表",
      "机械锚固汇总表",
      "支撑梁加腋钢筋汇总表",
    ],
  },
  { label: "施工段汇总表", leaves: ["施工段钢筋汇总表", "施工段钢筋接头汇总表"] },
];
const SELECTED = "植筋楼层构件类型级别直径汇总表";

/* ---------- sections ---------- */

const ReportDialog = () => (
  <Dialog aria-label="报表">
    <DialogTitle>
      <h2>报表</h2>
      <WindowButtons>
        <button aria-label="最小化">
          <Line size={12} box={12} stroke="#666" w={1}><path d="M1 9.500h10" /></Line>
        </button>
        <button aria-label="最大化">
          <Line size={12} box={12} stroke="#666" w={1}><rect x="1.500" y="1.500" width="9" height="9" /></Line>
        </button>
        <button aria-label="关闭"><Cross size={11} color="#777" /></button>
      </WindowButtons>
    </DialogTitle>
    <DialogTools>
      <DialogTool><RangeIcon /><span>设置报表范围</span></DialogTool>
      <DialogTool><BackCheck /><span>报表反查</span></DialogTool>
      <DialogTool $gap={7}><ExportIcon /><span>导出</span><Caret /></DialogTool>
      <DialogTool $gap={5}><PrintIcon /><span>打印预览</span></DialogTool>
      <SearchBox>
        <input placeholder="搜索报表" aria-label="搜索报表" />
        <SearchIcon />
      </SearchBox>
    </DialogTools>
    <DialogBody>
      <TreeSide>
        <ReportTabs>
          <ReportTab $active>钢筋报表量</ReportTab>
          <ReportTab>土建报表量</ReportTab>
          <ReportTab>装配式报表量</ReportTab>
          <ReportTab>钢结构报表量</ReportTab>
        </ReportTabs>
        <TreePanel>
          <ul>
            {TREE.map((g) => (
              <li key={g.label}>
                <GroupRow><TreeCaret />{g.label}</GroupRow>
                <ul>
                  {g.leaves.map((leaf) => (
                    <LeafRow key={leaf}>
                      <LeafButton $selected={leaf === SELECTED}>
                        <LeafIcon />
                        {leaf}
                        {leaf === SELECTED && <Callout />}
                      </LeafButton>
                    </LeafRow>
                  ))}
                </ul>
              </li>
            ))}
          </ul>
        </TreePanel>
      </TreeSide>
      <Splitter />
      <ReportArea>
        <ReportTable>
          <colgroup>
            <col width="73" />
            <col width="69" />
            <col width="88" />
          </colgroup>
          <tbody>
            <tr>
              <th rowSpan={2}>楼层名称</th>
              <th rowSpan={2}>构件类型</th>
              <th />
            </tr>
            <tr>
              <th />
            </tr>
          </tbody>
        </ReportTable>
      </ReportArea>
    </DialogBody>
    <StatusBar>
      <svg width="8" height="8" viewBox="0 0 8 8" fill="#6e7480" aria-hidden="true">
        <path d="M6 0h2v2H6zM3 3h2v2H3zM6 3h2v2H6zM0 6h2v2H0zM3 6h2v2H3zM6 6h2v2H6z" />
      </svg>
    </StatusBar>
    <Pointer width="200" height="450" viewBox="0 0 200 450" aria-hidden="true">
      <defs>
        <linearGradient id="tail" gradientUnits="userSpaceOnUse" x1="5" y1="442" x2="40" y2="360">
          <stop offset="0" stopColor="#ff2014" stopOpacity="0.100" />
          <stop offset="1" stopColor="#ff2014" />
        </linearGradient>
      </defs>
      <path d="M189 2l2 17-4-3L103 213 5 442 99 211 182 14l-6 0z" fill="url(#tail)" />
    </Pointer>
  </Dialog>
);

export default function App() {
  return (
    <Shell>
      <GlobalStyle />
      <TitleBar>
        {QUICK.map(([label, icon]) => (
          <QuickButton key={label} aria-label={label}>{icon}</QuickButton>
        ))}
        <button aria-label="自定义快速访问栏">
          <svg width="16" height="8" viewBox="0 0 16 8" fill="#555" aria-hidden="true">
            <path d="M6 0h5v1H6zM6 3h5L8.500 6z" />
          </svg>
        </button>
        <WindowTitle>
          {"广联达BIM土建计量平台 GTJ2025 - [D:\\思礼循环经济产园\\审查合格后CAD\\办公楼\\GTJ文件\\思礼循环经济产业园.GTJ]"}
        </WindowTitle>
      </TitleBar>
      <TabBar>
        {MENU.map((m) => (
          <MenuTab key={m} $active={m === "工程量"}>{m}</MenuTab>
        ))}
        <Notice>土建计量GTJ中，楼层设置中显示错乱，地下楼层显示</Notice>
      </TabBar>
      <Ribbon>
        <SelectGroup>
          <SelectButton><ArrowCursor />选择</SelectButton>
          <ToolColumn>
            <SmallTool><Dropper />拾取构件</SmallTool>
            <SmallTool><BatchSelect />批量选择</SmallTool>
            <SmallTool><PropSelect /><span>按属性选择<Caret /></span></SmallTool>
          </ToolColumn>
          <ToolColumn>
            <SmallTool><FindElement />查找图元</SmallTool>
            <SmallTool disabled><FilterIcon />过滤图元</SmallTool>
          </ToolColumn>
          <GroupLabel>选择</GroupLabel>
        </SelectGroup>
        {GROUPS.map((g, i) => (
          <RibbonGroup key={i} $min={g.min}>
            {g.tools.map((t) => (
              <BigTool key={t.label} disabled={t.off}>
                <BigIcon>{t.icon}</BigIcon>
                {t.label}
              </BigTool>
            ))}
          </RibbonGroup>
        ))}
      </Ribbon>
      <FloorBar>
        {["首层", "装修", "墙面"].map((v) => (
          <Picker key={v}>
            <select aria-label={v}><option>{v}</option></select>
            <Caret color="#555" />
          </Picker>
        ))}
      </FloorBar>
      <Workspace>
        <NavPanel>
          <PanelHeader>
            <Grip />
            <h2>导航栏</h2>
            <button aria-label="关闭导航栏"><Cross /></button>
          </PanelHeader>
          <NavBody>
            <NavList>
              {NAV.map((n) => (
                <li key={n.label}>
                  <NavItem $active={!!n.children}>
                    <NavIcon name={n.icon} />
                    {n.label}
                    {n.dot && <Dot />}
                  </NavItem>
                  {n.children?.map((c) => (
                    <SubItem key={c} $active={c === "墙面(W)"}>{c}</SubItem>
                  ))}
                </li>
              ))}
            </NavList>
            <ScrollThumb />
          </NavBody>
        </NavPanel>
        <DockColumn>
          <Dock $height={220}>
            <PanelHeader>
              <Grip />
              <DockTab>构件列表</DockTab>
            </PanelHeader>
            <DockTools>
              <DockButton $split aria-label="新建构件"><NewDoc size={18} /><Caret /></DockButton>
              <DockButton aria-label="复制构件"><CopyIcon /></DockButton>
            </DockTools>
            <DockSearch placeholder="搜索构件..." aria-label="搜索构件" />
          </Dock>
          <Dock>
            <PanelHeader><Grip /><h2>属性列表</h2></PanelHeader>
            <FieldHead>属性名称</FieldHead>
          </Dock>
          <Dock $height={86}>
            <PanelHeader><Grip /><h2>图层管理</h2></PanelHeader>
            <DockTools $tight>
              <DockButton aria-label="显示图层"><LayerIcon /></DockButton>
              <DockButton aria-label="隐藏图层"><LayerIcon closed /></DockButton>
            </DockTools>
            <LayerTable>
              <thead><tr><th>开 / 关</th><th>颜色</th><th /></tr></thead>
            </LayerTable>
          </Dock>
        </DockColumn>
      </Workspace>
      <ReportDialog />
    </Shell>
  );
}
